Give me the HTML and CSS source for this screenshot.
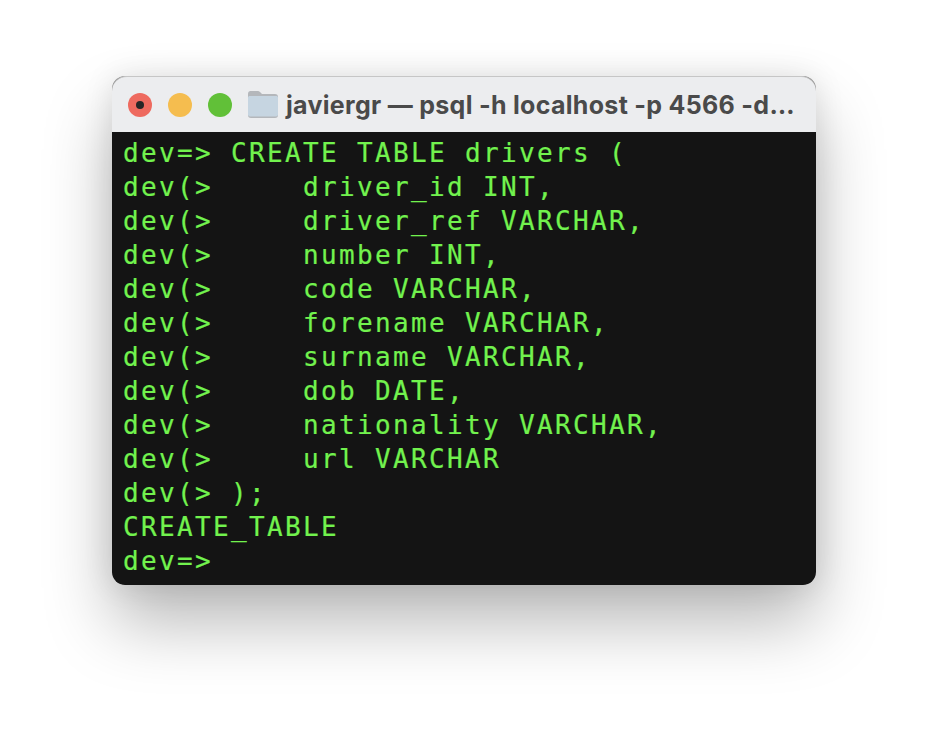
FILE: index.html
```html
<!DOCTYPE html>
<html lang="en">
<head>
<meta charset="utf-8">
<title>Terminal</title>
<link rel="stylesheet" href="styles.css">
</head>
<body>
<main class="window">
  <header class="titlebar">
    <div class="lights">
      <span class="light red"><span class="dot"></span></span>
      <span class="light yellow"></span>
      <span class="light green"></span>
    </div>
    <svg class="folder" width="32" height="29" viewBox="0 0 32 29">
      <path d="M1 4C1 2 2 1 3.500 1H11C12.500 1 13 2 14 3L15 4H28C30 4 31 5 31 7V25C31 27 30 28 28 28H4C2 28 1 27 1 25Z" fill="#b4b7bb"/>
      <path d="M1 7.500C1 6.500 2 6 3 6H29C30 6 31 6.500 31 7.500V24.500C31 25.500 30 26.500 29 26.500H3C2 26.500 1 25.500 1 24.500Z" fill="#c6d5e1"/>
    </svg>
    <h1 class="title">javiergr — psql -h localhost -p 4566 -d…</h1>
  </header>
  <pre class="terminal">dev=&gt; CREATE TABLE drivers (
dev(&gt;     driver_id INT,
dev(&gt;     driver_ref VARCHAR,
dev(&gt;     number INT,
dev(&gt;     code VARCHAR,
dev(&gt;     forename VARCHAR,
dev(&gt;     surname VARCHAR,
dev(&gt;     dob DATE,
dev(&gt;     nationality VARCHAR,
dev(&gt;     url VARCHAR
dev(&gt; );
CREATE_TABLE
dev=&gt;</pre>
</main>
</body>
</html>
```
FILE: styles.css
```css
html, body {
  margin: 0;
  height: 100%;
  background: #fff;
}
body {
  padding: 76px 0 0 112px;
  box-sizing: border-box;
  overflow: hidden;
}
.window {
  width: 704px;
  height: 509px;
  border-radius: 13px;
  background: #8f8f8f;
  box-shadow: 0 38px 68px rgba(0, 0, 0, 0.28), 0 0 30px rgba(0, 0, 0, 0.1);
  display: flex;
  flex-direction: column;
  overflow: hidden;
}
.titlebar {
  height: 56px;
  flex: none;
  display: flex;
  align-items: center;
  padding-left: 16px;
  background: #ecedef;
  border-top: 1px solid #c6c6c6;
  border-radius: 15px 15px 0 0;
  box-sizing: border-box;
}
.lights {
  display: flex;
  gap: 16px;
}
.light {
  width: 24px;
  height: 24px;
  border-radius: 50%;
  display: flex;
  align-items: center;
  justify-content: center;
}
.red { background: #ee6a5f; }
.yellow { background: #f5bd4f; }
.green { background: #61c038; }
.dot {
  width: 8px;
  height: 8px;
  border-radius: 50%;
  background: #262626;
}
.folder {
  margin-left: 15px;
  flex: none;
}
.title {
  margin: 0 0 0 7px;
  font: 700 25px/30px Inter, "Liberation Sans", sans-serif;
  letter-spacing: 0.3px;
  color: #4a4a4a;
  white-space: nowrap;
}
.terminal {
  flex: 1;
  margin: 0;
  padding: 4px 0 0 11px;
  background: #141414;
  border-radius: 0 0 13px 13px;
  color: #72f24e;
  font: 400 26px/34px "DejaVu Sans Mono", monospace;
  letter-spacing: 2.35px;
  -webkit-text-stroke: 0.2px #72f24e;
}
```
